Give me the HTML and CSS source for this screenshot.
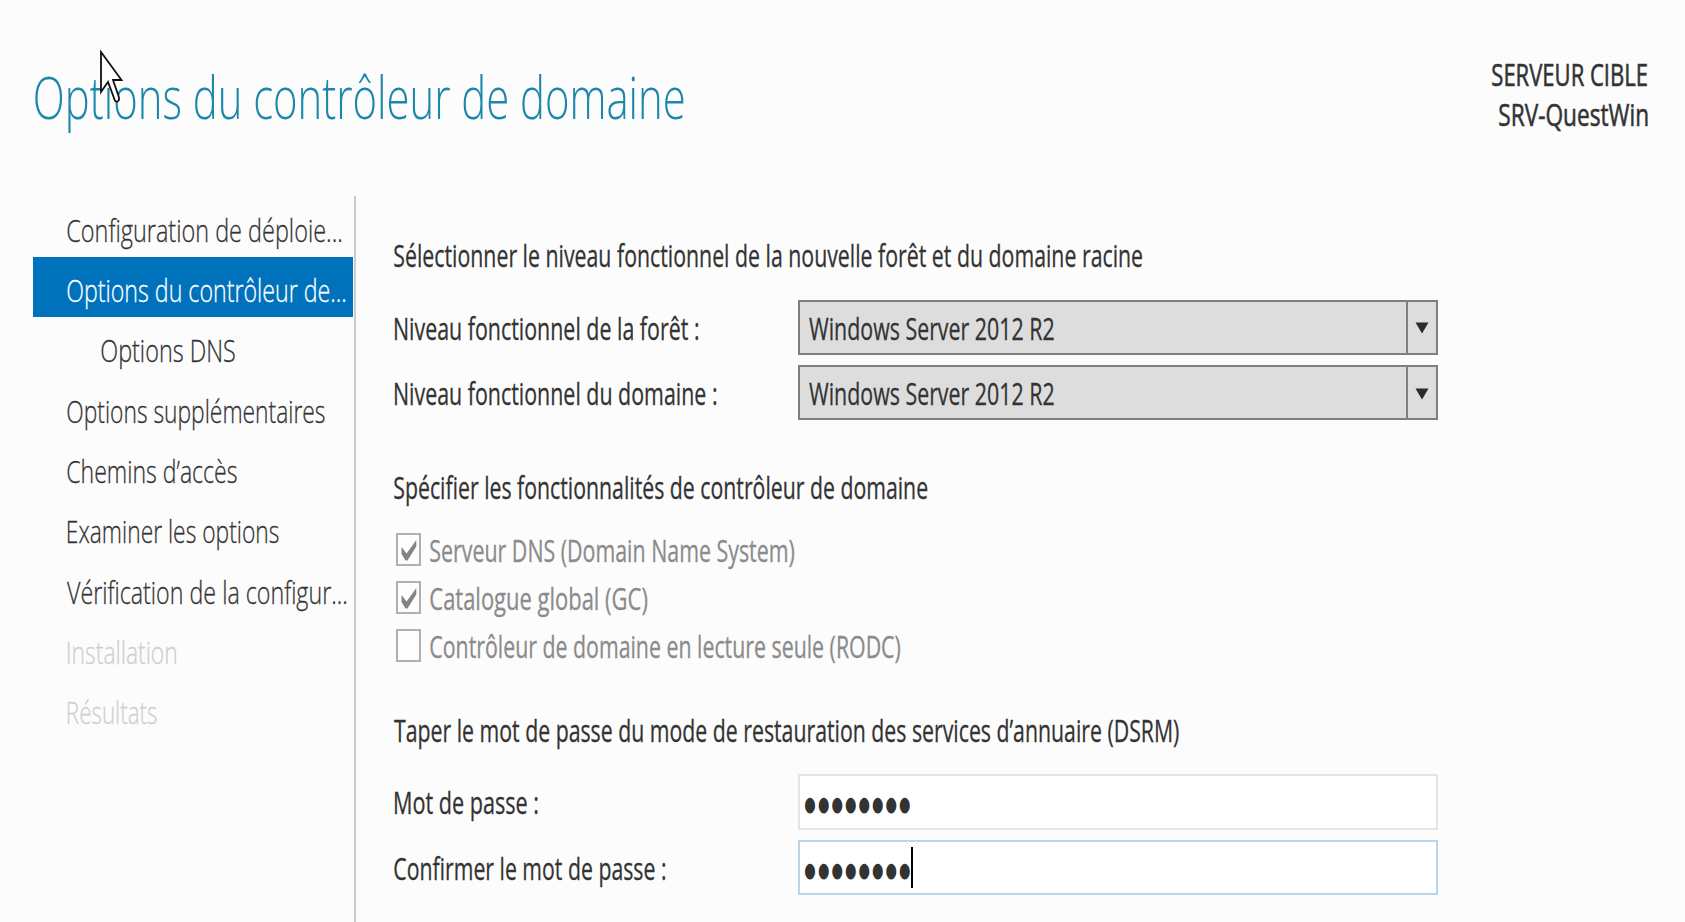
FILE: index.html
```html
<!DOCTYPE html>
<html lang="fr">
<head>
<meta charset="utf-8">
<title>Options du contrôleur de domaine</title>
<link rel="stylesheet" href="styles.css">
</head>
<body>
<div class="wizard">
  <header class="header">
    <h1 class="title"><span class="fit" data-width="649">Options du contrôleur de domaine</span></h1>
    <div class="target">
      <div class="target-line first"><span class="fit" data-width="155">SERVEUR CIBLE</span></div>
      <div class="target-line second"><span class="fit" data-width="148.5">SRV-QuestWin</span></div>
    </div>
  </header>
  <div class="body">
    <nav class="steps">
      <div class="step"><span class="fit" data-width="274">Configuration de déploie...</span></div>
      <div class="step active"><span class="fit" data-width="278">Options du contrôleur de...</span></div>
      <div class="step sub"><span class="fit" data-width="134">Options DNS</span></div>
      <div class="step"><span class="fit" data-width="258">Options supplémentaires</span></div>
      <div class="step"><span class="fit" data-width="170">Chemins d’accès</span></div>
      <div class="step stem"><span class="fit" data-width="211">Examiner les options</span></div>
      <div class="step"><span class="fit" data-width="279">Vérification de la configur...</span></div>
      <div class="step stem disabled"><span class="fit" data-width="108">Installation</span></div>
      <div class="step stem disabled"><span class="fit" data-width="89">Résultats</span></div>
    </nav>
    <main class="content">
      <section class="group levels">
        <div class="heading"><span class="fit" data-width="748">Sélectionner le niveau fonctionnel de la nouvelle forêt et du domaine racine</span></div>
        <div class="field">
          <div class="label"><span class="fit" data-width="303">Niveau fonctionnel de la forêt :</span></div>
          <div class="select"><div class="value"><span class="fit" data-width="245">Windows Server 2012 R2</span></div><div class="drop"><svg width="14" height="12" viewBox="0 0 14 12"><path d="M.5.5h13L7 11.5z" fill="#2b2b2b"/></svg></div></div>
        </div>
        <div class="field">
          <div class="label"><span class="fit" data-width="321">Niveau fonctionnel du domaine :</span></div>
          <div class="select"><div class="value"><span class="fit" data-width="245">Windows Server 2012 R2</span></div><div class="drop"><svg width="14" height="12" viewBox="0 0 14 12"><path d="M.5.5h13L7 11.5z" fill="#2b2b2b"/></svg></div></div>
        </div>
      </section>
      <section class="group features">
        <div class="heading"><span class="fit" data-width="533">Spécifier les fonctionnalités de contrôleur de domaine</span></div>
        <div class="check"><div class="box"><svg width="21" height="29" viewBox="0 0 21 29"><path d="M3.5 12 8.600 18.500 18.300 5v6.500L9.500 25.500H7.500L3.500 19z" fill="#858585"/></svg></div><span class="fit" data-width="364">Serveur DNS (Domain Name System)</span></div>
        <div class="check"><div class="box"><svg width="21" height="29" viewBox="0 0 21 29"><path d="M3.5 12 8.600 18.500 18.300 5v6.500L9.500 25.500H7.500L3.500 19z" fill="#858585"/></svg></div><span class="fit" data-width="217">Catalogue global (GC)</span></div>
        <div class="check"><div class="box"></div><span class="fit" data-width="470">Contrôleur de domaine en lecture seule (RODC)</span></div>
      </section>
      <section class="group password">
        <div class="heading"><span class="fit" data-width="784.5">Taper le mot de passe du mode de restauration des services d’annuaire (DSRM)</span></div>
        <div class="field">
          <div class="label"><span class="fit" data-width="142.5">Mot de passe :</span></div>
          <div class="input"><span class="fit dots" data-width="105">●●●●●●●●</span></div>
        </div>
        <div class="field">
          <div class="label round"><span class="fit" data-width="271">Confirmer le mot de passe :</span></div>
          <div class="input focused"><span class="fit dots" data-width="105">●●●●●●●●</span><i class="caret"></i></div>
        </div>
      </section>
    </main>
  </div>
  <svg class="cursor" width="26" height="56" viewBox="0 0 26 56"><path d="M2 2V42L9 32 15 48Q16 52.500 18.500 51.500 21 50.500 19.500 46L14 30H22.500Z" fill="#fff" stroke="#111" stroke-width="1.8"/></svg>
</div>
<script src="fit.js"></script>
</body>
</html>
```

FILE: styles.css
```css
* { box-sizing: border-box; }
body {
  margin: 0;
  background: #fcfcfc;
  color: #333;
  font-family: "Open Sans", "Noto Sans", sans-serif;
  font-size: 31.3px;
  line-height: 41px;
}
.wizard {
  position: relative;
  width: 1685px;
  height: 922px;
  overflow: hidden;
  display: flex;
  flex-direction: column;
}
.fit {
  display: inline-block;
  white-space: pre;
  transform-origin: 0 50%;
}
.header {
  display: flex;
  justify-content: space-between;
  height: 196px;
  padding-left: 34.5px;
}
.title {
  margin: 56px 0 0;
  width: 660px;
  height: 80px;
  font-size: 59px;
  line-height: 80px;
  font-weight: 300;
  color: #1c86ab;
}
.target {
  width: 193px;
  padding-top: 54px;
  -webkit-text-stroke: .6px currentColor;
}
.target-line { height: 40.4px; }
.second { padding-left: 6.5px; }
.body { display: flex; height: 726px; }
.steps {
  width: 356px;
  padding: .4px 2px 0 32.5px;
  border-right: 2px solid #cacaca;
  font-weight: 300;
  -webkit-text-stroke: .3px currentColor;
}
.step {
  width: 320.5px;
  height: 60.3px;
  padding: 13.5px 0 0 34.5px;
}
.step.stem { padding-left: 35.5px; }
.step.sub { padding-left: 68px; }
.step.active { background: #0072bc; color: #fff; }
.step.disabled { color: #cfcfcf; }
.content {
  width: 1084px;
  padding-left: 38.4px;
  -webkit-text-stroke: .3px currentColor;
}
.heading { height: 40px; }
.levels { padding-top: 39px; }
.levels .heading { margin-bottom: 24.5px; }
.field {
  display: flex;
  align-items: center;
  height: 55.4px;
  margin-bottom: 10px;
}
.label { width: 404px; padding-left: 1px; padding-top: 2px; }
.label.round { padding-left: 0; }
.select {
  display: flex;
  width: 639.5px;
  height: 55.4px;
  border: 2px solid #7f7f7f;
  background: #ddd;
}
.value { width: 606px; padding: 6px 0 0 9px; }
.drop {
  flex: 1;
  display: flex;
  align-items: center;
  justify-content: center;
  padding-top: 2px;
  border-left: 2px solid #7f7f7f;
}
.features { padding-top: 36.7px; }
.features .heading { margin-bottom: 26.3px; }
.check {
  display: flex;
  height: 33px;
  margin-bottom: 14.8px;
  padding-left: 1.8px;
  line-height: 34px;
  color: #8b8b8b;
}
.box {
  width: 25px;
  height: 33px;
  margin-right: 9px;
  border: 2px solid #b0b0b0;
  background: #fdfdfd;
}
.box svg { display: block; }
.password { padding-top: 33px; }
.password .heading { margin-bottom: 24.6px; }
.input {
  position: relative;
  width: 639.5px;
  height: 55.4px;
  padding-left: 5px;
  border: 2px solid #e3e3ea;
  background: #fff;
  line-height: 47px;
}
.input.focused { border-color: #bad4ea; }
.dots {
  font-family: "DejaVu Sans", sans-serif;
  font-size: 20.5px;
  letter-spacing: 3.2px;
  -webkit-text-stroke: 0;
}
.caret {
  position: absolute;
  left: 110.5px;
  top: 5px;
  width: 2px;
  height: 41px;
  background: #000;
}
.cursor { position: absolute; left: 99px; top: 50px; }
```

FILE: fit.js
```js
// Condense each label horizontally so its inked width equals data-width.
const ctx = document.createElement('canvas').getContext('2d');
document.querySelectorAll('.fit').forEach(el => {
  const cs = getComputedStyle(el);
  ctx.font = `${cs.fontWeight} ${cs.fontSize} ${cs.fontFamily}`;
  const gap = parseFloat(cs.letterSpacing) || 0;
  const m = ctx.measureText(el.textContent);
  const ink = m.actualBoundingBoxRight + m.actualBoundingBoxLeft + gap * (el.textContent.length - 1);
  const s = el.dataset.width / ink;
  el.style.transform = `translateX(${m.actualBoundingBoxLeft * s}px) scaleX(${s})`;
});
```
